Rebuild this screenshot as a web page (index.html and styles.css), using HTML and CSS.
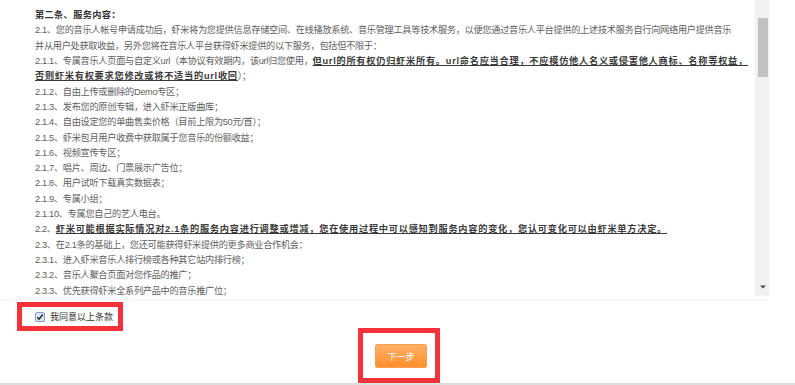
FILE: index.html
```html
<!DOCTYPE html>
<html lang="zh-CN">
<head>
<meta charset="utf-8">
<title>服务条款</title>
<link rel="stylesheet" href="styles.css">
</head>
<body>
<div class="page">
  <div class="terms">
    <div class="content">
      <div class="line"><b class="title">第二条、服务内容：</b></div>
      <div class="line">2.1、您的音乐人帐号申请成功后，虾米将为您提供信息存储空间、在线播放系统、音乐管理工具等技术服务，以便您通过音乐人平台提供的上述技术服务自行向网络用户提供音乐</div>
      <div class="line">并从用户处获取收益，另外您将在音乐人平台获得虾米提供的以下服务，包括但不限于：</div>
      <div class="line">2.1.1、专属音乐人页面与自定义url（本协议有效期内，该url归您使用，<b class="em">但url的所有权仍归虾米所有。url命名应当合理，不应模仿他人名义或侵害他人商标、名称等权益，</b></div>
      <div class="line"><b class="em">否则虾米有权要求您修改或将不适当的url收回</b>）；</div>
      <div class="line">2.1.2、自由上传或删除的Demo专区；</div>
      <div class="line">2.1.3、发布您的原创专辑，进入虾米正版曲库；</div>
      <div class="line">2.1.4、自由设定您的单曲售卖价格（目前上限为50元/首）；</div>
      <div class="line">2.1.5、虾米包月用户收费中获取属于您音乐的份额收益；</div>
      <div class="line">2.1.6、视频宣传专区；</div>
      <div class="line">2.1.7、唱片、周边、门票展示广告位；</div>
      <div class="line">2.1.8、用户试听下载真实数据表；</div>
      <div class="line">2.1.9、专属小组；</div>
      <div class="line">2.1.10、专属您自己的艺人电台。</div>
      <div class="line">2.2、<b class="em">虾米可能根据实际情况对2.1条的服务内容进行调整或增减，您在使用过程中可以感知到服务内容的变化，您认可变化可以由虾米单方决定。</b></div>
      <div class="line">2.3、在2.1条的基础上，您还可能获得虾米提供的更多商业合作机会：</div>
      <div class="line">2.3.1、进入虾米音乐人排行榜或各种其它站内排行榜；</div>
      <div class="line">2.3.2、音乐人聚合页面对您作品的推广；</div>
      <div class="line">2.3.3、优先获得虾米全系列产品中的音乐推广位；</div>
    </div>
    <div class="scrollbar">
      <div class="thumb"></div>
      <div class="track-fill"></div>
      <svg class="arrow" width="6" height="4" viewBox="0 0 6 4"><path d="M0 0.5 H6 L3 3.5 Z" fill="#4a4a4a"/></svg>
    </div>
  </div>
  <div class="agree-row">
    <label class="agree">
      <span class="check">
        <svg width="8" height="8" viewBox="0 0 8 8"><path d="M1.2 4.2 L3.1 6.1 L6.8 1.6" fill="none" stroke="#2b2b2b" stroke-width="1.5"/></svg>
      </span>
      <span class="agree-text">我同意以上条款</span>
    </label>
  </div>
  <div class="btn-row">
    <div class="btn-frame">
      <span class="btn">下一步</span>
    </div>
  </div>
</div>
</body>
</html>
```

FILE: styles.css
```css
* { box-sizing: border-box; }

html, body {
  margin: 0;
  padding: 0;
  background: #ffffff;
}

body {
  font-family: "Liberation Sans", "Noto Sans CJK SC", sans-serif;
  font-size: 9.2px;
  color: #5e5e5e;
}

.page {
  width: 795px;
  height: 385px;
  display: flex;
  flex-direction: column;
  border-bottom: 2px solid #dedede;
  overflow: hidden;
}

.terms {
  height: 300px;
  width: 769px;
  display: flex;
  border-bottom: 1px solid #f2f2f2;
  flex: none;
}

.content {
  flex: 1;
  min-width: 0;
  height: 297px;
  overflow: hidden;
  padding: 8px 0 0 35px;
}

.line {
  line-height: 15.32px;
  height: 15.32px;
  white-space: nowrap;
  letter-spacing: -0.3px;
}

.title {
  color: #333;
  font-weight: bold;
  letter-spacing: 0.35px;
}

.em {
  color: #3a3a3a;
  font-weight: bold;
  letter-spacing: 0.75px;
  text-decoration: underline;
  text-underline-offset: 1px;
}

.scrollbar {
  width: 14px;
  height: 296px;
  flex: none;
  background: #f1f1f1;
  display: flex;
  flex-direction: column;
  align-items: center;
  padding: 18px 0 7px 1px;
}

.thumb {
  width: 10px;
  height: 59px;
  background: #c1c1c1;
  flex: none;
}

.track-fill { flex: 1; }

.arrow { flex: none; }

.agree-row {
  display: flex;
  padding: 2px 0 0 17px;
  flex: none;
}

.agree {
  display: inline-flex;
  align-items: center;
  gap: 5px;
  border: 5px solid #f5323a;
  height: 29px;
  padding: 0 5px 0 13px;
  color: #333;
  font-size: 9px;
}

.check {
  width: 10px;
  height: 10px;
  border: 1px solid #7d9fd0;
  background: #dbe7f8;
  border-radius: 2px;
  display: flex;
  align-items: center;
  justify-content: center;
}

.check svg { display: block; }

.btn-row {
  display: flex;
  justify-content: flex-start;
  padding-left: 358px;
  margin-top: -3px;
  flex: none;
}

.btn-frame {
  border: 5px solid #f5323a;
  width: 82px;
  height: 55px;
  padding: 11px 0 0 12px;
}

.btn {
  display: flex;
  align-items: center;
  justify-content: center;
  width: 52px;
  height: 24px;
  border: 1px solid #f7a055;
  border-radius: 2px;
  background: linear-gradient(#ffb066, #ff8e2b);
  color: #fff;
  font-size: 9px;
}
```
